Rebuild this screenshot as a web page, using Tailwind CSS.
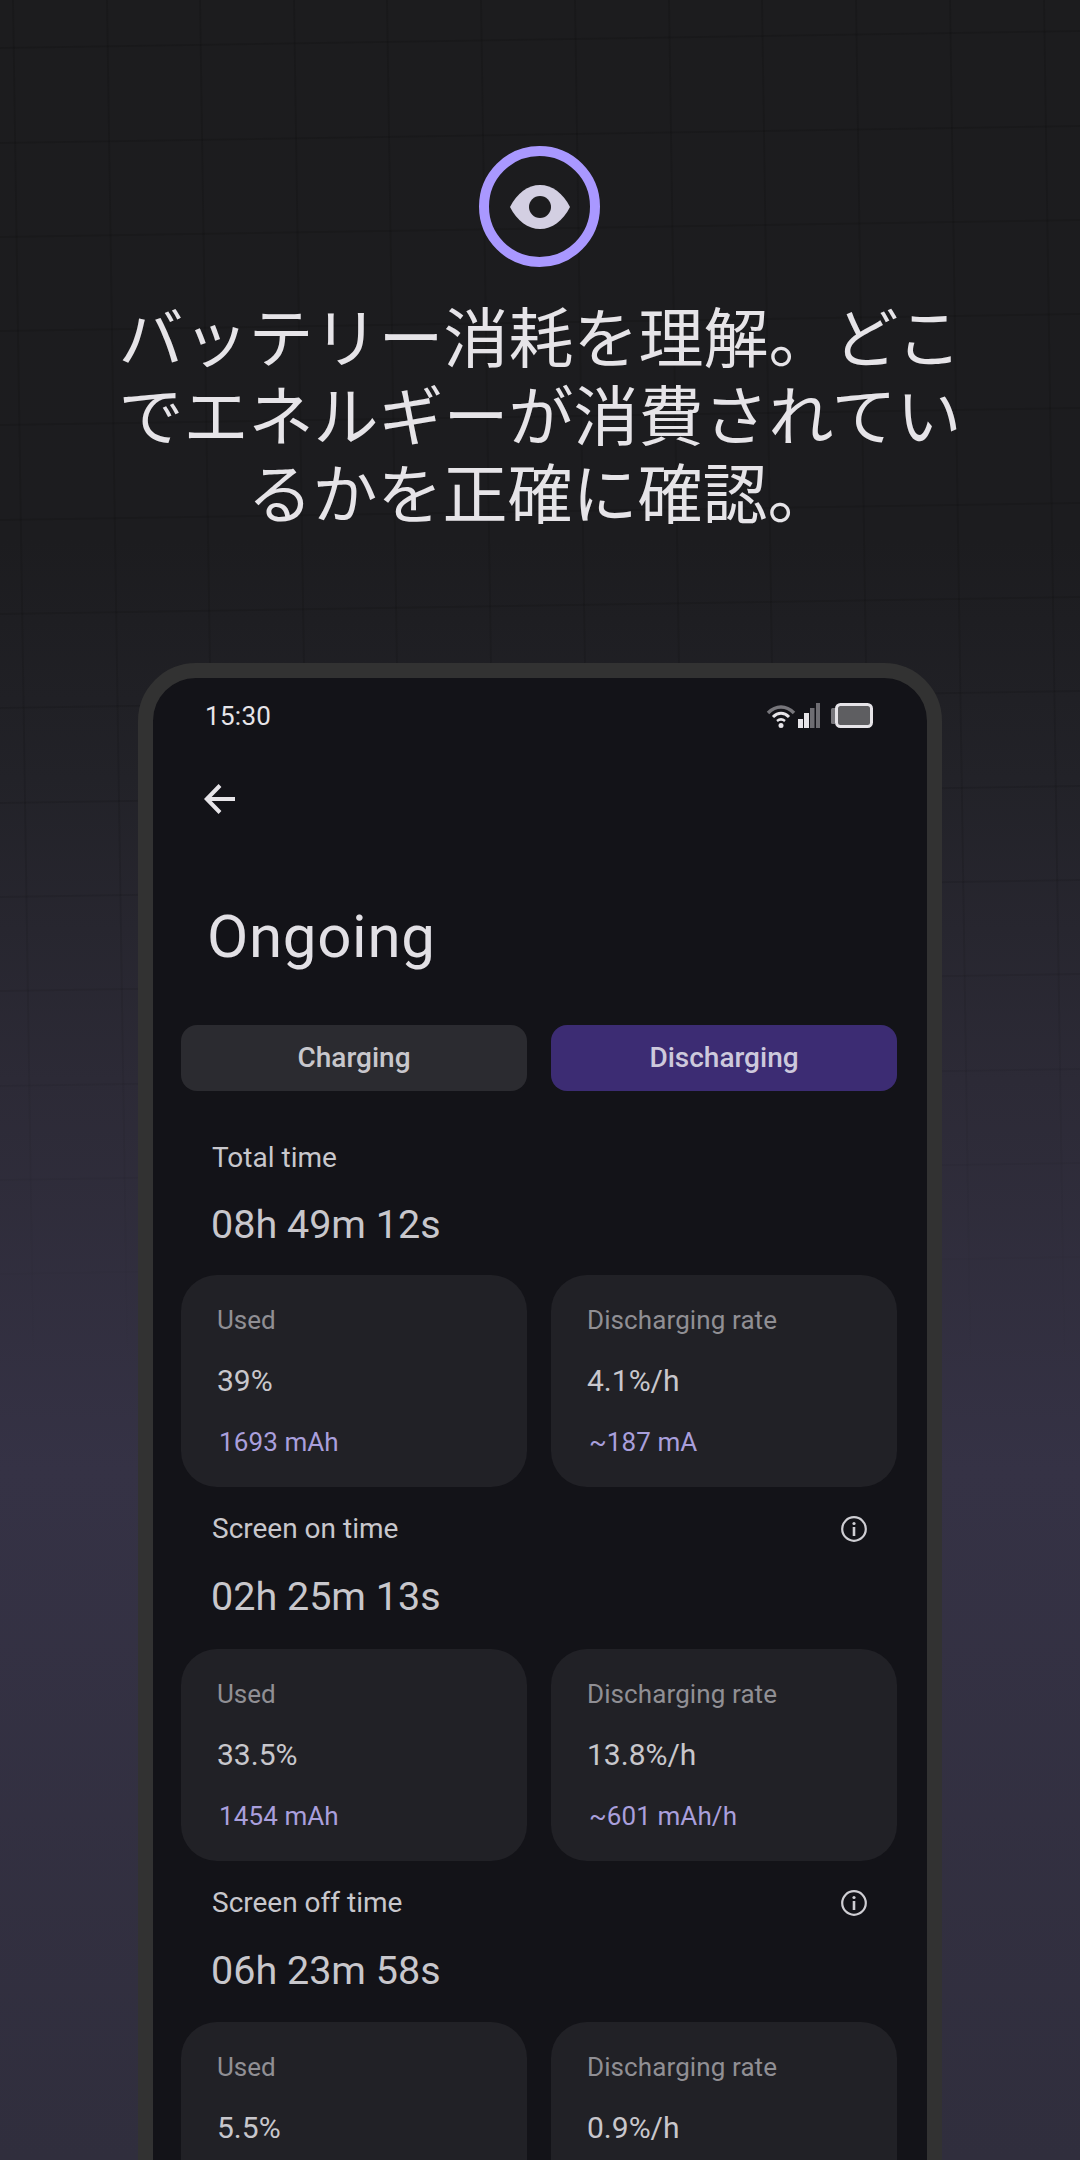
<!DOCTYPE html>
<html lang="ja">
<head>
    <meta charset="UTF-8">
    <meta name="viewport" content="width=device-width, initial-scale=1.0">
    <title>Ongoing</title>
    <script src="https://cdn.jsdelivr.net/npm/@tailwindcss/browser@4"></script>
</head>
<body class="bg-[#1c1c1e] font-['Roboto',sans-serif]">
<div class="relative w-[1080px] h-[2160px] overflow-hidden bg-[linear-gradient(180deg,#1c1c1e_0%,#1c1c1f_25%,#222228_36%,#2c2a36_50%,#353245_68%,#302e3d_100%)]">

    <!-- background grid -->
    <svg class="absolute inset-0" width="1080" height="2160" fill="none" stroke-width="2">
        <defs>
            <linearGradient id="gridFade" gradientUnits="userSpaceOnUse" x1="0" y1="0" x2="0" y2="1400">
                <stop offset="0" stop-color="#000" stop-opacity="0.13"/>
                <stop offset="0.6" stop-color="#000" stop-opacity="0.11"/>
                <stop offset="1" stop-color="#000" stop-opacity="0"/>
            </linearGradient>
        </defs>
        <path stroke="url(#gridFade)" d="M13 0L34 1400M107 0L128 1400M200 0L221 1400M294 0L315 1400M387 0L408 1400M481 0L502 1400M575 0L596 1400M669 0L690 1400M762 0L783 1400M856 0L877 1400M950 0L971 1400M1044 0L1065 1400"/>
        <path stroke="url(#gridFade)" d="M0 48L1080 31M0 143L1080 126M0 237L1080 220M0 331L1080 314M0 425L1080 408M0 520L1080 503M0 614L1080 597M0 708L1080 691M0 803L1080 786M0 897L1080 880M0 991L1080 974M0 1086L1080 1069M0 1180L1080 1163M0 1274L1080 1257M0 1368L1080 1351"/>
    </svg>

    <!-- header -->
    <div class="relative flex flex-col items-center pt-[146px]">
        <div class="flex items-center justify-center w-[121px] h-[121px] mr-[1px] rounded-full border-[10px] border-[#a998ff]">
            <svg width="60" height="44" viewBox="0 0 60 44">
                <path fill="#d3cfe2" d="M0 22C7 8 18 0 30 0S53 8 60 22C53 36 42 44 30 44S7 36 0 22Z"/>
                <circle cx="30" cy="22" r="11" fill="#1c1c1e"/>
            </svg>
        </div>
        <h1 class="mt-[28px] w-[860px] text-center text-[65px] leading-[78px] text-[#e6e4e8] font-normal font-['Noto_Sans_CJK_JP',sans-serif]">バッテリー消耗を理解。どこでエネルギーが消費されているかを正確に確認。</h1>
    </div>

    <!-- phone -->
    <div class="absolute left-[138px] top-[663px] w-[804px] h-[1560px] rounded-[58px] border-[15px] border-[#323232] bg-[#131318] text-[#e6e4e8]">
        <div class="flex items-center justify-between pl-[52px] pr-[54px] pt-[18px] h-[58px]">
            <span class="text-[26px] font-normal tracking-[0.3px]">15:30</span>
            <div class="flex items-center">
                <svg width="30" height="24" viewBox="0 0 30 24" fill="none">
                    <path d="M2 9C10 1 20 1 28 9" stroke="#77767b" stroke-width="3.500"/>
                    <path d="M7 13C12 8 18 8 23 13" stroke="#e6e4e8" stroke-width="3"/>
                    <path d="M11 17C13.500 15 16.500 15 19 17" stroke="#e6e4e8" stroke-width="2.500"/>
                    <circle cx="15" cy="21.500" r="2.500" fill="#e6e4e8"/>
                </svg>
                <svg class="ml-[2px]" width="22" height="26" viewBox="0 0 22 26">
                    <rect x="0" y="16" width="5" height="9" fill="#e6e4e8"/>
                    <rect x="6" y="10" width="5" height="15" fill="#e6e4e8"/>
                    <rect x="12" y="5" width="4.500" height="20" fill="#6e6d72"/>
                    <rect x="18" y="0" width="4" height="25" fill="#6e6d72"/>
                </svg>
                <svg class="ml-[11px]" width="42" height="26" viewBox="0 0 42 26">
                    <path d="M4 5H1.500A1.500 1.500 0 0 0 0 6.500V19.500A1.500 1.500 0 0 0 1.500 21H4Z" fill="#77767b"/>
                    <rect x="5.500" y="1.500" width="35" height="22" rx="4" fill="#5e5e61" stroke="#e6e4e8" stroke-width="3"/>
                </svg>
            </div>
        </div>

        <div class="pl-[51px] pt-[48px]">
            <svg class="block" width="32" height="30" viewBox="0 0 32 30" fill="none" stroke="#e6e4e8" stroke-width="4">
                <path d="M16 1.500L2.800 15L16 28.500M2.800 15H31"/>
            </svg>
        </div>

        <h2 class="ml-[54px] mt-[85px] text-[60px] leading-[76px] font-normal tracking-[0.7px] text-[#e2e0e5]">Ongoing</h2>

        <div class="grid grid-cols-2 gap-[24px] pl-[28px] pr-[30px] mt-[50px]">
            <button class="h-[66px] rounded-[16px] bg-[#2b2b30] text-[28px] font-medium text-[#c8c7cc]">Charging</button>
            <button class="h-[66px] rounded-[16px] bg-[#3c2c73] text-[28px] font-medium text-[#cdc9dc]">Discharging</button>
        </div>

        <!-- Total time -->
        <section class="pl-[28px] pr-[30px] mt-[49px]">
            <div class="flex items-center justify-between pl-[31px] pr-[30px] h-[36px] text-[28px] text-[#c8c7cc]">Total time</div>
            <p class="pl-[30px] mt-[27px] text-[39.500px] leading-[44px] text-[#c8c7cc]">08h 49m 12s</p>
            <div class="grid grid-cols-2 gap-[24px] mt-[28px]">
                <div class="h-[212px] rounded-[36px] bg-[#212126] pl-[36px] pt-[28px]">
                    <p class="text-[26px] leading-[34px] text-[#908f94]">Used</p>
                    <p class="mt-[27px] text-[30px] leading-[34px] text-[#c8c7cc]">39%</p>
                    <p class="ml-[2px] mt-[27px] text-[26px] leading-[34px] tracking-[0.1px] text-[#a99fdc]">1693 mAh</p>
                </div>
                <div class="h-[212px] rounded-[36px] bg-[#212126] pl-[36px] pt-[28px]">
                    <p class="text-[26px] leading-[34px] tracking-[0.1px] text-[#908f94]">Discharging rate</p>
                    <p class="mt-[27px] text-[30px] leading-[34px] text-[#c8c7cc]">4.1%/h</p>
                    <p class="ml-[2px] mt-[27px] text-[26px] leading-[34px] tracking-[0.1px] text-[#a99fdc]">~187 mA</p>
                </div>
            </div>
        </section>

        <!-- Screen on time -->
        <section class="pl-[28px] pr-[30px] mt-[24px]">
            <div class="flex items-center justify-between pl-[31px] pr-[30px] h-[36px] text-[28px] text-[#c8c7cc]">
                <span>Screen on time</span>
                <svg width="26" height="26" viewBox="0 0 26 26" fill="none" stroke="#cfced3" stroke-width="2.200">
                    <circle cx="13" cy="13" r="11.800"/>
                    <path d="M13 11V20" stroke-width="2.600"/>
                    <circle cx="13" cy="7.500" r="1.600" fill="#cfced3" stroke="none"/>
                </svg>
            </div>
            <p class="pl-[30px] mt-[28px] text-[39.500px] leading-[44px] text-[#c8c7cc]">02h 25m 13s</p>
            <div class="grid grid-cols-2 gap-[24px] mt-[30px]">
                <div class="h-[212px] rounded-[36px] bg-[#212126] pl-[36px] pt-[28px]">
                    <p class="text-[26px] leading-[34px] text-[#908f94]">Used</p>
                    <p class="mt-[27px] text-[30px] leading-[34px] text-[#c8c7cc]">33.5%</p>
                    <p class="ml-[2px] mt-[27px] text-[26px] leading-[34px] tracking-[0.1px] text-[#a99fdc]">1454 mAh</p>
                </div>
                <div class="h-[212px] rounded-[36px] bg-[#212126] pl-[36px] pt-[28px]">
                    <p class="text-[26px] leading-[34px] tracking-[0.1px] text-[#908f94]">Discharging rate</p>
                    <p class="mt-[27px] text-[30px] leading-[34px] text-[#c8c7cc]">13.8%/h</p>
                    <p class="ml-[2px] mt-[27px] text-[26px] leading-[34px] tracking-[0.1px] text-[#a99fdc]">~601 mAh/h</p>
                </div>
            </div>
        </section>

        <!-- Screen off time -->
        <section class="pl-[28px] pr-[30px] mt-[24px]">
            <div class="flex items-center justify-between pl-[31px] pr-[30px] h-[36px] text-[28px] text-[#c8c7cc]">
                <span>Screen off time</span>
                <svg width="26" height="26" viewBox="0 0 26 26" fill="none" stroke="#cfced3" stroke-width="2.200">
                    <circle cx="13" cy="13" r="11.800"/>
                    <path d="M13 11V20" stroke-width="2.600"/>
                    <circle cx="13" cy="7.500" r="1.600" fill="#cfced3" stroke="none"/>
                </svg>
            </div>
            <p class="pl-[30px] mt-[28px] text-[39.500px] leading-[44px] text-[#c8c7cc]">06h 23m 58s</p>
            <div class="grid grid-cols-2 gap-[24px] mt-[29px]">
                <div class="h-[212px] rounded-[36px] bg-[#212126] pl-[36px] pt-[28px]">
                    <p class="text-[26px] leading-[34px] text-[#908f94]">Used</p>
                    <p class="mt-[27px] text-[30px] leading-[34px] text-[#c8c7cc]">5.5%</p>
                </div>
                <div class="h-[212px] rounded-[36px] bg-[#212126] pl-[36px] pt-[28px]">
                    <p class="text-[26px] leading-[34px] tracking-[0.1px] text-[#908f94]">Discharging rate</p>
                    <p class="mt-[27px] text-[30px] leading-[34px] text-[#c8c7cc]">0.9%/h</p>
                </div>
            </div>
        </section>
    </div>
</div>
</body>
</html>
